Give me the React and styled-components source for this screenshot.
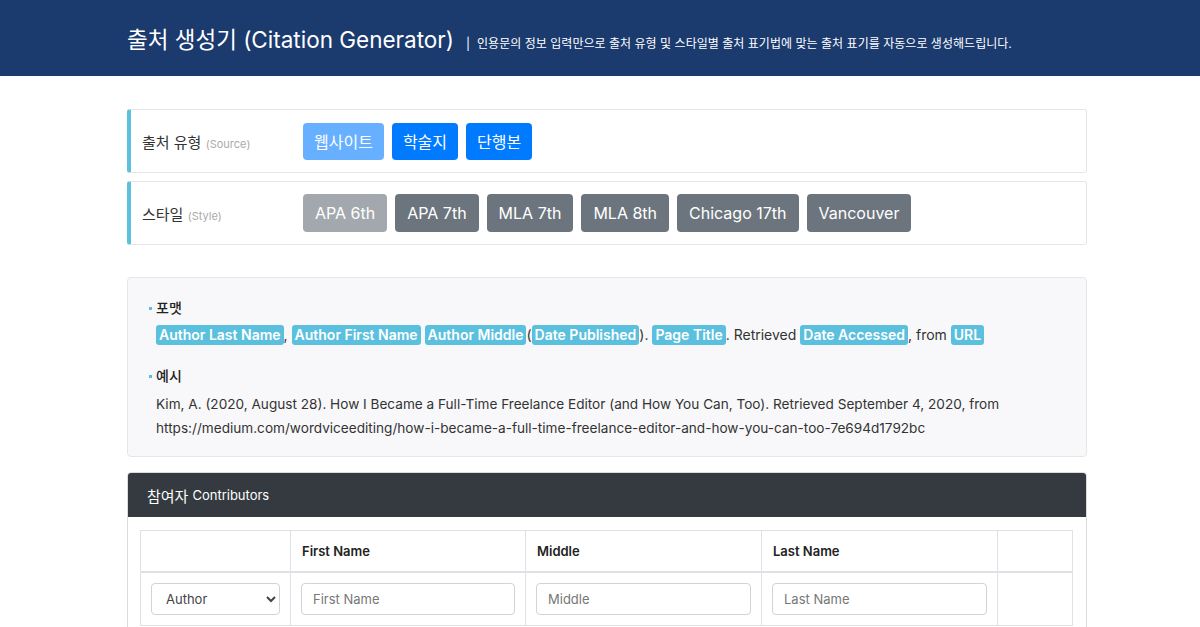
import React from "react";
import styled, { createGlobalStyle } from "styled-components";

const GlobalStyle = createGlobalStyle`
  body {
    margin: 0;
    background: #ffffff;
    font-family: Inter, "Noto Sans CJK KR", sans-serif;
    color: #333;
  }
`;

const sources = [
  { label: "웹사이트", active: true },
  { label: "학술지" },
  { label: "단행본" },
];

const styles = [
  { label: "APA 6th", active: true },
  { label: "APA 7th" },
  { label: "MLA 7th" },
  { label: "MLA 8th" },
  { label: "Chicago 17th" },
  { label: "Vancouver" },
];

const App = () => {
  return (
    <>
      <GlobalStyle />
      <Header>
        <HeaderInner>
          <Title>출처 생성기 (Citation Generator)</Title>
          <Divider>|</Divider>
          <Subtitle>
            인용문의 정보 입력만으로 출처 유형 및 스타일별 출처 표기법에 맞는 출처 표기를 자동으로 생성해드립니다.
          </Subtitle>
        </HeaderInner>
      </Header>

      <Container>
        <OptionRow>
          <OptionLabel>
            출처 유형 <small>(Source)</small>
          </OptionLabel>
          <ButtonGroup>
            {sources.map((s) => (
              <Btn key={s.label} $variant="primary" $faded={s.active}>
                {s.label}
              </Btn>
            ))}
          </ButtonGroup>
        </OptionRow>

        <OptionRow>
          <OptionLabel>
            스타일 <small>(Style)</small>
          </OptionLabel>
          <ButtonGroup>
            {styles.map((s) => (
              <Btn key={s.label} $variant="secondary" $faded={s.active} $tall>
                {s.label}
              </Btn>
            ))}
          </ButtonGroup>
        </OptionRow>

        <FormatBox>
          <BoxHeading>포맷</BoxHeading>
          <FormatLine>
            <Tag>Author Last Name</Tag>, <Tag>Author First Name</Tag>{" "}
            <Tag>Author Middle</Tag>(<Tag>Date Published</Tag>).{" "}
            <Tag>Page Title</Tag>. Retrieved <Tag>Date Accessed</Tag>, from{" "}
            <Tag>URL</Tag>
          </FormatLine>
          <BoxHeading $spaced>예시</BoxHeading>
          <Example>
            Kim, A. (2020, August 28). How I Became a Full-Time Freelance Editor
            (and How You Can, Too). Retrieved September 4, 2020, from
            https://medium.com/wordviceediting/how-i-became-a-full-time-freelance-editor-and-how-you-can-too-7e694d1792bc
          </Example>
        </FormatBox>

        <Card>
          <CardHeader>
            참여자 <small>Contributors</small>
          </CardHeader>
          <CardBody>
            <Table>
              <colgroup>
                <col style={{ width: 150 }} />
                <col style={{ width: 235 }} />
                <col style={{ width: 236 }} />
                <col style={{ width: 236 }} />
                <col />
              </colgroup>
              <thead>
                <tr>
                  <Th></Th>
                  <Th>First Name</Th>
                  <Th>Middle</Th>
                  <Th>Last Name</Th>
                  <Th></Th>
                </tr>
              </thead>
              <tbody>
                <tr>
                  <Td>
                    <Select defaultValue="Author">
                      <option>Author</option>
                      <option>Editor</option>
                    </Select>
                  </Td>
                  <Td>
                    <Input placeholder="First Name" />
                  </Td>
                  <Td>
                    <Input placeholder="Middle" />
                  </Td>
                  <Td>
                    <Input placeholder="Last Name" />
                  </Td>
                  <Td></Td>
                </tr>
              </tbody>
            </Table>
          </CardBody>
        </Card>
      </Container>
    </>
  );
};

export default App;

const Header = styled.header`
  background: #1b3a6e;
  height: 76px;
  display: flex;
  align-items: center;
`;

const HeaderInner = styled.div`
  margin-left: 127px;
  display: flex;
  align-items: baseline;
  color: #ffffff;
`;

const Title = styled.h1`
  margin: 0;
  font-size: 22.5px;
  font-weight: 400;
`;

const Divider = styled.span`
  font-size: 12px;
  margin: 0 7px 0 12px;
`;

const Subtitle = styled.span`
  font-size: 12px;
  letter-spacing: 0.03px;
`;

const Container = styled.main`
  width: 960px;
  margin: 33px 0 0 127px;
`;

const OptionRow = styled.section`
  display: flex;
  align-items: center;
  height: 62px;
  border: 1px solid #e6e6e6;
  border-left: 4px solid #5bc0de;
  border-radius: 3px;
  margin-bottom: 8px;
  padding-left: 11px;
`;

const OptionLabel = styled.div`
  width: 161px;
  font-size: 15px;
  color: #333;

  small {
    font-size: 11px;
    color: #aaa;
  }
`;

const ButtonGroup = styled.div`
  display: flex;
  gap: 8px;
`;

const Btn = styled.button`
  font-family: Inter, "Noto Sans CJK KR", sans-serif;
  font-size: 16px;
  height: ${(p) => (p.$tall ? "38px" : "37px")};
  padding: 0 ${(p) => (p.$tall ? "12px" : "11px")};
  border: none;
  border-radius: 4px;
  color: #fff;
  background: ${(p) =>
    p.$variant === "primary"
      ? p.$faded
        ? "#66b0ff"
        : "#007bff"
      : p.$faded
      ? "#a3a8ae"
      : "#6c757d"};
`;

const FormatBox = styled.section`
  margin-top: 32px;
  background: #f8f8fa;
  border: 1px solid #e6e6e6;
  border-radius: 4px;
  padding: 18px 27px 16px 28px;
  font-size: 14px;
`;

const BoxHeading = styled.h4`
  position: relative;
  margin: ${(p) => (p.$spaced ? "17px 0 0" : "0")};
  font-size: 14px;
  font-weight: 500;
  color: #222;
  line-height: 24px;

  &::before {
    content: "";
    position: absolute;
    left: -7px;
    top: 11px;
    width: 3px;
    height: 3px;
    background: #5bc0de;
  }
`;

const FormatLine = styled.div`
  margin-top: 3px;
  line-height: 24px;
  color: #333;
`;

const Tag = styled.span`
  display: inline-block;
  background: #5bc0de;
  color: #fff;
  font-weight: 600;
  padding: 0 3px;
  border-radius: 3px;
  line-height: 20px;
`;

const Example = styled.p`
  margin: 4px 0 0;
  font-size: 13.6px;
  line-height: 24px;
  color: #333;
`;

const Card = styled.section`
  margin-top: 15px;
  border: 1px solid #dcdcdc;
  border-radius: 4px;
  overflow: hidden;
`;

const CardHeader = styled.div`
  background: #343a40;
  color: #fff;
  height: 44px;
  display: flex;
  align-items: center;
  padding-left: 19px;
  font-size: 15px;

  small {
    font-size: 13px;
    margin-left: 4px;
  }
`;

const CardBody = styled.div`
  padding: 13px 12px 12px;
`;

const Table = styled.table`
  width: 933px;
  border-collapse: collapse;
  table-layout: fixed;
`;

const Th = styled.th`
  border: 1px solid #dee2e6;
  border-bottom-width: 2px;
  height: 40px;
  text-align: left;
  padding: 0 11px;
  font-size: 13px;
  font-weight: 600;
  color: #222;
`;

const Td = styled.td`
  border: 1px solid #dee2e6;
  padding: 10px 10px;
`;

const Select = styled.select`
  width: 100%;
  height: 32px;
  border: 1px solid #ced4da;
  border-radius: 4px;
  background: #fff;
  font-family: Inter, sans-serif;
  font-size: 13px;
  color: #444;
  padding: 0 10px;
`;

const Input = styled.input`
  box-sizing: border-box;
  width: 100%;
  height: 32px;
  border: 1px solid #ced4da;
  border-radius: 4px;
  font-family: Inter, sans-serif;
  font-size: 13px;
  padding: 0 11px;

  &::placeholder {
    color: #777;
  }
`;
